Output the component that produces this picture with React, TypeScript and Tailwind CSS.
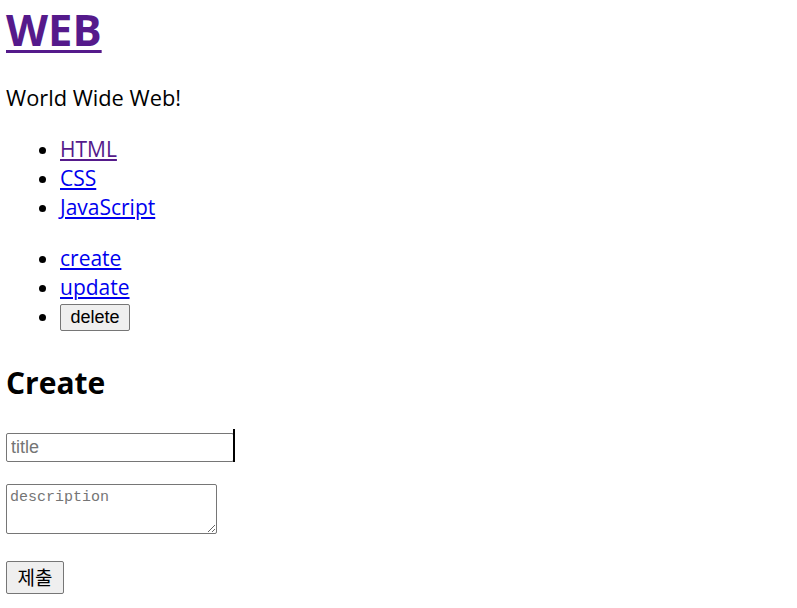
import React from "react";

export default function App() {
  return (
    <div className="min-h-[608px] bg-white pl-[6px] text-black font-['Open_Sans',sans-serif]">
      <h1 className="h-[59px] text-[43.5px] font-bold leading-[59px]">
        <a href="#" className="text-[#551a8b] underline decoration-[3px] underline-offset-[4px]">WEB</a>
      </h1>
      <p className="mt-[25px] h-[28px] text-[21.8px] leading-[28px]">World Wide Web!</p>
      <ul className="mt-[23px] list-disc pl-[54px] text-[21px] leading-[29px]">
        <li><a href="#" className="text-[#551a8b] underline">HTML</a></li>
        <li><a href="#" className="text-[#0000ee] underline">CSS</a></li>
        <li><a href="#" className="text-[#0000ee] underline">JavaScript</a></li>
      </ul>
      <ul className="mt-[22px] list-disc pl-[54px] text-[21px] leading-[29px]">
        <li><a href="#" className="text-[#0000ee] underline">create</a></li>
        <li><a href="#" className="text-[#0000ee] underline">update</a></li>
        <li className="h-[29px]">
          <button className="mt-[2px] h-[27px] w-[70px] rounded-[2px] border border-[#767676] bg-[#efefef] align-top text-[18px] leading-[25px] font-['Liberation_Sans',sans-serif]">delete</button>
        </li>
      </ul>
      <h2 className="mt-[35px] h-[34px] text-[30px] font-bold leading-[34px]">Create</h2>
      <div className="relative mt-[33px] h-[29px] w-[230px]">
        <input
          placeholder="title"
          className="h-[29px] w-[228px] rounded-[2px] border border-[#767676] px-[4px] text-[18px] placeholder:text-[#757575] font-['Liberation_Sans',sans-serif]"
        />
        <span className="absolute left-[227px] top-[-4px] h-[33px] w-[2px] bg-black" />
      </div>
      <div className="mt-[22px] h-[50px]">
        <textarea
          placeholder="description"
          className="h-[50px] w-[211px] rounded-[2px] border border-[#767676] px-[3px] py-[2px] text-[15px] leading-[22px] placeholder:text-[#757575] font-['Liberation_Mono',monospace]"
        />
      </div>
      <div className="mt-[27px]">
        <button className="h-[33px] w-[58px] rounded-[2px] border border-[#767676] bg-[#efefef] text-[19px] font-['Noto_Sans_CJK_KR',sans-serif]">제출</button>
      </div>
    </div>
  );
}
